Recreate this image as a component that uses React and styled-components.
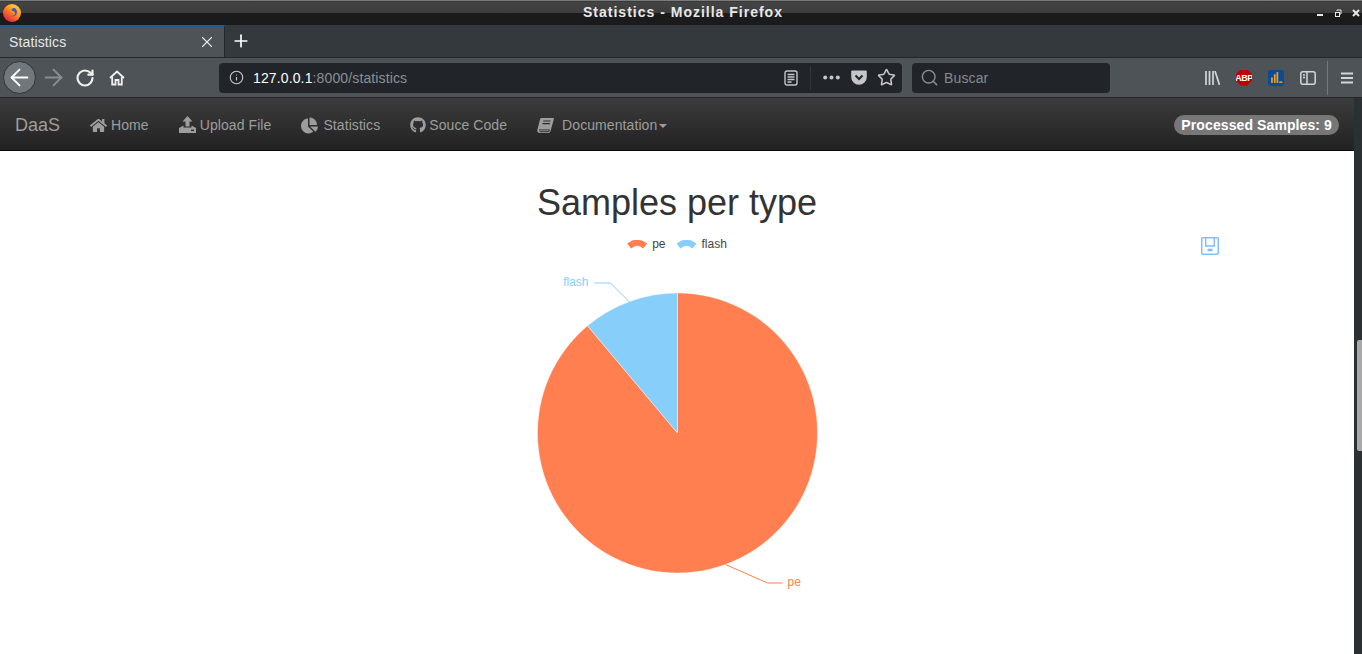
import React from 'react';
import styled, { createGlobalStyle } from 'styled-components';
import { FaHome, FaChartPie, FaGithub } from 'react-icons/fa';
import { ArrowLeft, ArrowRight, RotateCw, Info, Star, Search, X, Plus } from 'lucide-react';

const Global = createGlobalStyle`
  html, body {
    margin: 0;
    height: 100%;
    overflow: hidden;
    background: #fff;
    font-family: "Liberation Sans", Arial, sans-serif;
  }
  * { box-sizing: border-box; }
`;

function UploadIcon() {
  return (
    <svg width="17" height="18" viewBox="0 0 17 18" fill="currentColor">
      <path d="M8.5 0 L13.5 5.5 H10.5 V10.5 H6.5 V5.5 H3.5 Z" />
      <path d="M0 12 L4.5 9.5 V11.5 H12.5 V9.5 L17 12 V17 H0 Z" />
      <rect x="12" y="13.6" width="3" height="1.4" fill="#2c2c2c" />
    </svg>
  );
}

function BookIcon() {
  return (
    <svg width="17" height="17" viewBox="0 0 17 17">
      <path d="M4 1 H16.2 C16.9 1 17 1.5 16.8 2.2 L13.8 13.2 C13.5 14.4 13 15.2 12 16 H2.6 C0.9 16 0 14.6 0.3 13 L3 2.6 C3.2 1.6 3.5 1 4 1 Z" fill="currentColor" />
      <path d="M6.2 4 H13.6 M5.5 6.6 H12.9" stroke="#2c2c2c" strokeWidth="1.2" fill="none" />
      <path d="M2 12.9 H12.4 C12 13.6 11.8 14.2 11.8 14.7 H2.6" stroke="#2c2c2c" strokeWidth="0.9" fill="none" />
    </svg>
  );
}

function FirefoxLogo() {
  return (
    <svg width="18" height="18" viewBox="0 0 20 20">
      <defs>
        <linearGradient id="fx" x1="0.85" y1="0" x2="0.2" y2="1">
          <stop offset="0" stopColor="#ffe03a" />
          <stop offset="0.45" stopColor="#ff8a1e" />
          <stop offset="1" stopColor="#e61f4a" />
        </linearGradient>
      </defs>
      <circle cx="10" cy="10" r="10" fill="url(#fx)" />
      <circle cx="10.5" cy="8.8" r="5" fill="#3f56c4" />
      <path d="M5 2 C9 0 14 2.5 15 5 C12 3.8 9 5 9.6 7.4 C11.8 7.8 13.6 8.2 13.4 10.2 C13 13 9.4 14.2 6.8 12.6 C9 15.6 15 15.4 17 11 C17.6 16 12 19.6 7.6 18 C3 16.6 1 12 1.8 8 C2.4 5.4 3.4 3.4 5 2 Z" fill="url(#fx)" />
    </svg>
  );
}

const NAV_LINKS = [
  { label: 'Home', icon: <FaHome size={17} />, gap: 4 },
  { label: 'Upload File', icon: <UploadIcon />, gap: 4 },
  { label: 'Statistics', icon: <FaChartPie size={17} />, gap: 5 },
  { label: 'Souce Code', icon: <FaGithub size={16} />, gap: 3 },
  { label: 'Documentation', icon: <BookIcon />, gap: 8, caret: true },
];

export default function App() {
  return (
    <Win>
      <Global />
      <TitleBar>
        <LogoSlot><FirefoxLogo /></LogoSlot>
        <TitleText>Statistics - Mozilla Firefox</TitleText>
        <WinButtons>
          <svg width="8" height="8" viewBox="0 0 8 8" fill="#e8e8e8"><rect x="1" y="5" width="6" height="2" /></svg>
          <svg width="8" height="8" viewBox="0 0 8 8" fill="none" stroke="#e8e8e8"><rect x="1.5" y="3.5" width="4" height="4" /><path d="M3 2 V1 H7 V5 H6" /></svg>
          <svg width="8" height="8" viewBox="0 0 8 8" stroke="#e8e8e8" strokeWidth="2"><path d="M1 1 L7 7 M7 1 L1 7" /></svg>
        </WinButtons>
      </TitleBar>

      <TabStrip>
        <Tab>
          <TabLabel>Statistics</TabLabel>
          <X size={18} color="#e4e7ea" strokeWidth={1.5} />
        </Tab>
        <NewTab><Plus size={20} color="#fff" strokeWidth={2} /></NewTab>
      </TabStrip>

      <Toolbar>
        <BackButton><ArrowLeft size={27} color="#fff" strokeWidth={1.7} /></BackButton>
        <ToolIcon $w={34}><ArrowRight size={27} color="#8a8e91" strokeWidth={1.7} /></ToolIcon>
        <ToolIcon $w={30}><RotateCw size={20} color="#f0f0f0" strokeWidth={2.6} /></ToolIcon>
        <ToolIcon $w={33}>
          <svg width="16" height="16" viewBox="0 0 16 16" fill="none" stroke="#f0f0f0" strokeWidth="1.8">
            <path d="M1 8 L8 1.5 L15 8 M3.2 7 V14.5 H6.5 V10 H9.5 V14.5 H12.8 V7" />
          </svg>
        </ToolIcon>
        <UrlBar>
          <Info size={15} color="#c8cacc" strokeWidth={1.8} />
          <UrlText><b>127.0.0.1</b>:8000/statistics</UrlText>
          <UrlActions>
            <svg width="14" height="16" viewBox="0 0 14 16" fill="none" stroke="#c4c6c8" strokeWidth="1.4">
              <rect x="1" y="1" width="12" height="14" rx="2" />
              <path d="M3.5 4.5 H10.5 M3.5 7 H10.5 M3.5 9.5 H10.5 M3.5 12 H7.5" />
            </svg>
            <UrlDivider />
            <svg width="17" height="5" viewBox="0 0 17 5" fill="#c4c6c8">
              <circle cx="2.2" cy="2.5" r="2" />
              <circle cx="8.5" cy="2.5" r="2" />
              <circle cx="14.8" cy="2.5" r="2" />
            </svg>
            <PocketIcon width="16" height="15" viewBox="0 0 16 15">
              <path d="M1.5 0.5 H14.5 A1.3 1.3 0 0 1 15.8 2 V7 A7.8 7.8 0 0 1 0.2 7 V2 A1.3 1.3 0 0 1 1.5 0.5 Z" fill="#c4c6c8" />
              <path d="M4.5 5.5 L8 9 L11.5 5.5" fill="none" stroke="#212529" strokeWidth="2" />
            </PocketIcon>
            <Star size={19} color="#c4c6c8" strokeWidth={2} />
          </UrlActions>
        </UrlBar>
        <SearchBar>
          <Search size={19} color="#8a8e91" strokeWidth={1.8} />
          <SearchHint>Buscar</SearchHint>
        </SearchBar>
        <ToolRight>
          <svg width="15" height="14" viewBox="0 0 15 14" stroke="#d4d6d8" strokeWidth="1.7">
            <path d="M1 0 V14 M4.5 0 V14 M8 0 V14 M10 0 L14.5 14" />
          </svg>
          <AbpBadge>ABP</AbpBadge>
          <BarsBadge>
            <svg width="13" height="13" viewBox="0 0 12 12" fill="#f0a020">
              <rect x="1" y="6" width="1.6" height="5" />
              <rect x="3.6" y="3" width="1.6" height="8" />
              <rect x="6" y="1" width="1.6" height="10" />
              <rect x="8.5" y="9.6" width="3" height="1.4" />
            </svg>
          </BarsBadge>
          <svg width="16" height="14" viewBox="0 0 16 14" fill="none" stroke="#d4d6d8" strokeWidth="1.5">
            <rect x="0.8" y="0.8" width="14.4" height="12.4" rx="2" />
            <path d="M7 1 V13 M3 4 H5 M3 6.5 H5" />
          </svg>
          <ToolDivider />
          <svg width="12" height="12" viewBox="0 0 12 12" stroke="#d4d6d8" strokeWidth="2">
            <path d="M0 1.5 H12 M0 6 H12 M0 10.5 H12" />
          </svg>
        </ToolRight>
      </Toolbar>

      <Viewport>
        <Page>
          <NavBar>
            <Brand>DaaS</Brand>
            {NAV_LINKS.map(link => (
              <NavLink key={link.label} $gap={link.gap}>
                {link.icon}
                <span>{link.label}</span>
                {link.caret && <Caret />}
              </NavLink>
            ))}
            <Badge>Processed Samples: 9</Badge>
          </NavBar>
          <Content>
            <SaveButton>
              <svg width="18" height="18" viewBox="0 0 18 18" fill="none" stroke="#7fbfff" strokeWidth="1.5">
                <rect x="0.75" y="0.75" width="16.5" height="16.5" rx="1" />
                <path d="M4.7 1 V9 H13.3 V1" />
                <path d="M6.5 13 H11.5" strokeWidth="2.6" />
              </svg>
            </SaveButton>
            <Heading>Samples per type</Heading>
            <Legend>
              <LegendItem>
                <LegendMark $color="#ff7f50" />
                pe
              </LegendItem>
              <LegendItem>
                <LegendMark $color="#87cefa" />
                flash
              </LegendItem>
            </Legend>
            <Chart>
              <svg width="300" height="340" viewBox="0 0 300 340">
                <g transform="translate(150.5 168)">
                  <path d="M0 0 L0 -140 A140 140 0 1 1 -89.99 -107.25 Z" fill="#ff7f50" stroke="#fff" strokeWidth="0.4" />
                  <path d="M0 0 L-89.99 -107.25 A140 140 0 0 1 0 -140 Z" fill="#87cefa" stroke="#fff" strokeWidth="0.4" />
                  <path d="M-47 -130 L-67 -150 H-83" fill="none" stroke="#87cefa" strokeWidth="1" />
                  <path d="M48 131.5 L90 150 H105" fill="none" stroke="#ff7f50" strokeWidth="1" />
                  <ChartLabel x="-89" y="-147" textAnchor="end" fill="#87cefa">flash</ChartLabel>
                  <ChartLabel x="110" y="153" fill="#ff7f50">pe</ChartLabel>
                </g>
              </svg>
            </Chart>
          </Content>
        </Page>
        <ScrollTrack>
          <ScrollThumb />
        </ScrollTrack>
      </Viewport>
    </Win>
  );
}

const Win = styled.div`
  width: 1362px;
  height: 654px;
  display: flex;
  flex-direction: column;
  overflow: hidden;
`;
const TitleBar = styled.div`
  height: 25px;
  flex: none;
  display: flex;
  align-items: center;
  justify-content: center;
  position: relative;
  background: linear-gradient(#7b7b7b 0, #7b7b7b 1px, #2e2e2e 1px, #444 2px, #3d3d3d 13px, #1b1b1b 13px, #1b1b1b 100%);
`;
const LogoSlot = styled.div`
  position: absolute;
  left: 3px;
  top: 4px;
  display: flex;
`;
const TitleText = styled.div`
  font-size: 14px;
  font-weight: 700;
  color: #e8e8e8;
  letter-spacing: 1px;
  margin: 0 0 1px 4px;
`;
const WinButtons = styled.div`
  position: absolute;
  right: 2px;
  top: 9px;
  display: flex;
  gap: 10px;
`;
const TabStrip = styled.div`
  height: 33px;
  flex: none;
  display: flex;
  background: #33393d;
  border-bottom: 1px solid #25282b;
`;
const Tab = styled.div`
  width: 225px;
  display: flex;
  align-items: center;
  justify-content: space-between;
  padding: 0 8px 0 9px;
  background: #4e5357;
  border-top: 2px solid #1b5c9c;
  border-right: 1px solid #25282b;
`;
const TabLabel = styled.span`
  font-size: 14px;
  letter-spacing: 0.13px;
  color: #e4e7ea;
`;
const NewTab = styled.div`
  width: 32px;
  display: flex;
  align-items: center;
  justify-content: center;
`;
const Toolbar = styled.div`
  height: 40px;
  flex: none;
  display: flex;
  align-items: center;
  padding-left: 3px;
  background: #4e5357;
  border-bottom: 1px solid #25282b;
`;
const BackButton = styled.div`
  width: 33px;
  height: 33px;
  flex: none;
  display: flex;
  align-items: center;
  justify-content: center;
  border-radius: 50%;
  background: #72777b;
  border: 1px solid #2f3336;
`;
const ToolIcon = styled.div`
  width: ${p => p.$w}px;
  flex: none;
  display: flex;
  justify-content: center;
`;
const UrlBar = styled.div`
  width: 683px;
  height: 30px;
  flex: none;
  margin-left: 86px;
  display: flex;
  align-items: center;
  padding: 0 6px 0 10px;
  background: #212529;
  border-radius: 4px;
`;
const UrlText = styled.div`
  margin-left: 9px;
  font-size: 14px;
  letter-spacing: 0.13px;
  color: #8c9094;
  b {
    font-weight: 400;
    color: #fff;
  }
`;
const UrlActions = styled.div`
  margin-left: auto;
  display: flex;
  align-items: center;
  gap: 12px;
`;
const PocketIcon = styled.svg`
  margin-left: -1px;
  margin-right: -2px;
`;
const UrlDivider = styled.div`
  width: 1px;
  height: 24px;
  background: #33383c;
`;
const SearchBar = styled.div`
  width: 198px;
  height: 30px;
  flex: none;
  margin-left: 10px;
  display: flex;
  align-items: center;
  gap: 5px;
  padding-left: 8px;
  background: #212529;
  border-radius: 4px;
`;
const SearchHint = styled.span`
  font-size: 14px;
  letter-spacing: 0.13px;
  color: #85898c;
`;
const ToolRight = styled.div`
  margin-left: 95px;
  display: flex;
  align-items: center;
  gap: 16px;
`;
const AbpBadge = styled.div`
  width: 16px;
  height: 16px;
  display: flex;
  align-items: center;
  justify-content: center;
  font-size: 9px;
  font-weight: 700;
  letter-spacing: -0.5px;
  color: #fff;
  background: #c00000;
  clip-path: polygon(30% 0, 70% 0, 100% 30%, 100% 70%, 70% 100%, 30% 100%, 0 70%, 0 30%);
`;
const BarsBadge = styled.div`
  width: 16px;
  height: 16px;
  display: flex;
  align-items: center;
  justify-content: center;
  background: #0c4a92;
  border-radius: 3px;
`;
const ToolDivider = styled.div`
  width: 1px;
  height: 34px;
  margin: 0 -3px 0 -5px;
  background: #74787b;
`;
const Viewport = styled.div`
  flex: 1;
  min-height: 0;
  display: flex;
`;
const Page = styled.div`
  flex: 1;
  min-width: 0;
  display: flex;
  flex-direction: column;
  background: #fff;
`;
const NavBar = styled.nav`
  height: 53px;
  flex: none;
  display: flex;
  align-items: center;
  padding: 2px 15px 0;
  background: linear-gradient(#3c3c3c, #222);
  border-bottom: 1px solid #080808;
`;
const Brand = styled.div`
  font-size: 18px;
  color: #9d9d9d;
  margin-right: 15px;
`;
const NavLink = styled.div`
  display: flex;
  align-items: center;
  gap: ${p => p.$gap}px;
  padding: 0 15px;
  font-size: 14px;
  letter-spacing: 0.08px;
  color: #9d9d9d;
`;
const Caret = styled.span`
  width: 0;
  height: 0;
  margin-left: -6px;
  margin-top: 2px;
  border-top: 4px solid #9d9d9d;
  border-left: 4px solid transparent;
  border-right: 4px solid transparent;
`;
const Badge = styled.div`
  margin-left: auto;
  padding: 3px 7px;
  border-radius: 10px;
  background: #777;
  color: #fff;
  font-size: 14px;
  font-weight: 700;
  letter-spacing: 0.1px;
  line-height: 14px;
`;
const Content = styled.main`
  position: relative;
  flex: 1;
  display: flex;
  flex-direction: column;
  align-items: center;
`;
const SaveButton = styled.div`
  position: absolute;
  left: 1201px;
  top: 86px;
  display: flex;
`;
const Heading = styled.h1`
  margin: 32px 0 0;
  font-size: 36px;
  font-weight: 500;
  line-height: 40px;
  color: #333;
`;
const Legend = styled.div`
  margin-top: 14px;
  display: flex;
  gap: 11px;
`;
const LegendItem = styled.div`
  display: flex;
  align-items: center;
  gap: 5px;
  font-size: 12px;
  line-height: 14px;
  color: #444;
`;
const LegendMark = styled.span`
  width: 20px;
  height: 9px;
  background: ${p => p.$color};
  clip-path: polygon(0 45%, 25% 10%, 50% 0, 75% 10%, 100% 45%, 80% 100%, 65% 78%, 50% 70%, 35% 78%, 20% 100%);
`;
const Chart = styled.div`
  margin-top: 14px;
  display: flex;
`;
const ChartLabel = styled.text`
  font-size: 12px;
  font-family: "Liberation Sans", Arial, sans-serif;
`;
const ScrollTrack = styled.div`
  width: 8px;
  flex: none;
  position: relative;
  background: #2b3033;
`;
const ScrollThumb = styled.div`
  position: absolute;
  left: 3px;
  right: 0;
  top: 242px;
  height: 111px;
  border-radius: 2px 0 0 2px;
  background: #a9a9a9;
`;
